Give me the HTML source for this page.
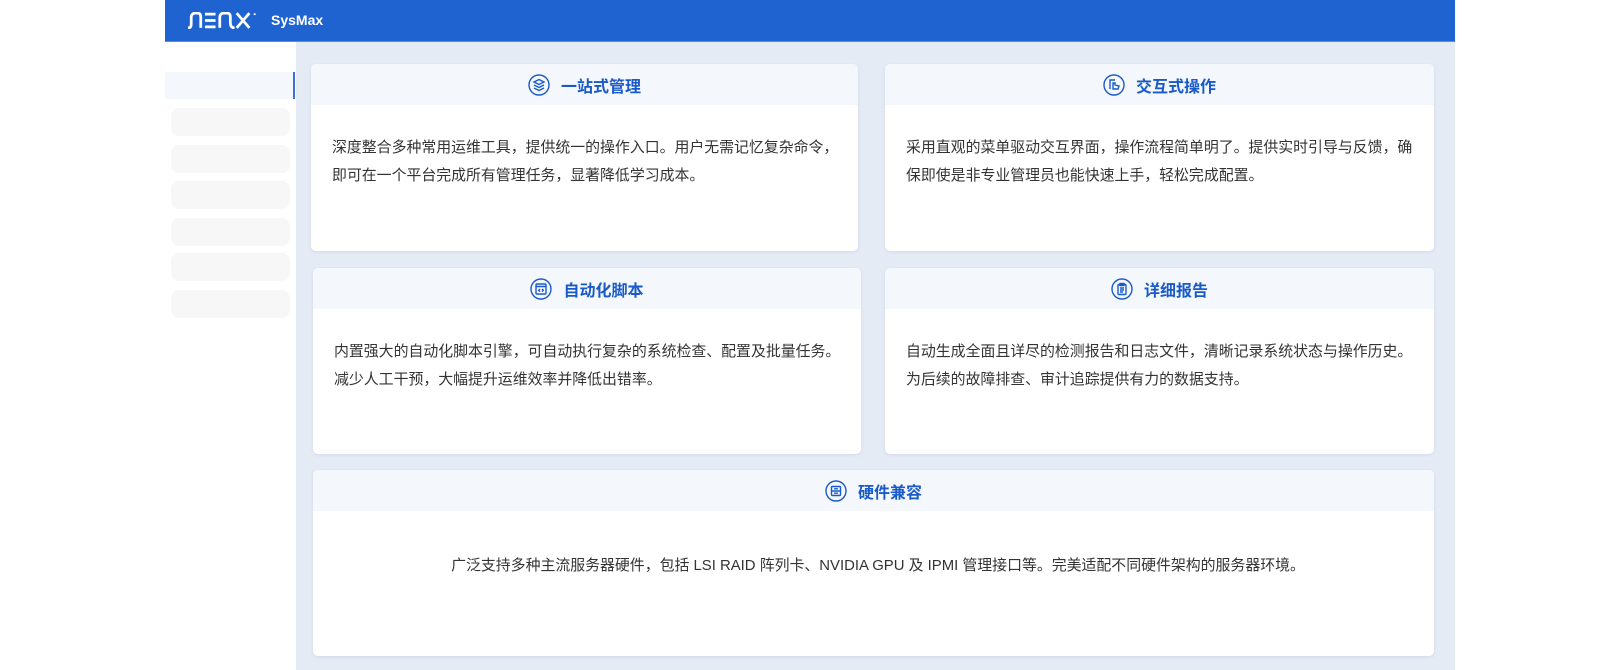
<!DOCTYPE html>
<html><head><meta charset="utf-8"><style>
*{margin:0;padding:0;box-sizing:border-box}
body{width:1620px;height:670px;background:#fff;position:relative;overflow:hidden;font-family:"Liberation Sans","Noto Sans CJK SC",sans-serif}
.hdr{position:absolute;left:165px;top:0;width:1290px;height:42px;background:#1f63d0;border-bottom:1px solid #5a8be0}
.sm{position:absolute;left:106px;top:12px;color:#fff;font-size:14px;font-weight:bold}
.side{position:absolute;left:165px;top:42px;width:131px;height:628px;background:#fff}
.act{position:absolute;left:165px;top:72px;width:130px;height:27px;background:#f4f8fd;border-right:2px solid #3a6fe0}
.gi{position:absolute;left:171px;width:119px;height:28px;background:#f7f7f7;border-radius:8px}
.main{position:absolute;left:296px;top:42px;width:1159px;height:628px;background:#e5ebf5}
.card{position:absolute;background:#fff;border-radius:5px;box-shadow:0 1px 3px rgba(120,140,180,.18);overflow:hidden}
.ch{height:41px;background:#f4f8fd;display:flex;align-items:center;justify-content:center;color:#1a5ac8;font-weight:bold;font-size:16px}
.ch svg{margin-right:11px}
.cb{padding:29px 12px 0 21px;font-size:14.9px;line-height:28px;color:#333}
</style></head><body>
<div class="hdr">
<svg style="position:absolute;left:22px;top:12px" width="74" height="17" viewBox="0 0 70 16" fill="none" stroke="#fff" stroke-width="2.6">
<path d="M1 15 C4 15 4 13 4 10 L4 5 C4 2 6 1 8 1 L10 1 C12 1 13 2 13 5 L13 15"/>
<path d="M17 2 H27 M17 8 H27 M17 14 H27"/>
<path d="M31 15 V5 C31 2 33 1 35 1 H38 C40 1 41 2 41 5 V10 C41 13 42 15 45 15"/>
<path d="M47 1 L59 15 M59 1 L47 15"/>
<circle cx="64" cy="2" r="1" fill="#fff" stroke="none"/>
</svg>
<div class="sm">SysMax</div>
</div>
<div class="side"></div>
<div class="act"></div>
<div class="gi" style="top:108px"></div>
<div class="gi" style="top:145px"></div>
<div class="gi" style="top:181px"></div>
<div class="gi" style="top:218px"></div>
<div class="gi" style="top:253px"></div>
<div class="gi" style="top:290px"></div>
<div class="main"></div>

<div class="card" style="left:311px;top:64px;width:547px;height:187px">
<div class="ch"><svg width="22" height="22" viewBox="0 0 22 22" fill="none" stroke="#1a5ac8" stroke-width="1.4"><circle cx="11" cy="11" r="10"/><path d="M6 8 L11 5.5 L16 8 L11 10.5Z"/><path d="M6 11 L11 13.5 L16 11"/><path d="M6 14 L11 16.5 L16 14"/></svg>一站式管理</div>
<div class="cb">深度整合多种常用运维工具，提供统一的操作入口。用户无需记忆复杂命令，即可在一个平台完成所有管理任务，显著降低学习成本。</div></div>

<div class="card" style="left:885px;top:64px;width:549px;height:187px">
<div class="ch"><svg width="22" height="22" viewBox="0 0 22 22" fill="none" stroke="#1a5ac8" stroke-width="1.4"><circle cx="11" cy="11" r="10"/><path d="M7 15 V6 H12"/><path d="M10 9 V15 H15 L16 12 L12 11 V9Z"/></svg>交互式操作</div>
<div class="cb">采用直观的菜单驱动交互界面，操作流程简单明了。提供实时引导与反馈，确保即使是非专业管理员也能快速上手，轻松完成配置。</div></div>

<div class="card" style="left:313px;top:268px;width:548px;height:186px">
<div class="ch"><svg width="22" height="22" viewBox="0 0 22 22" fill="none" stroke="#1a5ac8" stroke-width="1.4"><circle cx="11" cy="11" r="10"/><rect x="6" y="6" width="10" height="10" rx="1"/><path d="M6 8.5 H16"/><path d="M10 11 L8.7 12.3 L10 13.6 M12 11 L13.3 12.3 L12 13.6"/></svg>自动化脚本</div>
<div class="cb">内置强大的自动化脚本引擎，可自动执行复杂的系统检查、配置及批量任务。减少人工干预，大幅提升运维效率并降低出错率。</div></div>

<div class="card" style="left:885px;top:268px;width:549px;height:186px">
<div class="ch"><svg width="22" height="22" viewBox="0 0 22 22" fill="none" stroke="#1a5ac8" stroke-width="1.4"><circle cx="11" cy="11" r="10"/><rect x="7" y="6.5" width="8" height="10" rx="1"/><rect x="9" y="5.5" width="4" height="2"/><path d="M9 10 H13 M9 12 H13 M9 14 H12"/></svg>详细报告</div>
<div class="cb">自动生成全面且详尽的检测报告和日志文件，清晰记录系统状态与操作历史。为后续的故障排查、审计追踪提供有力的数据支持。</div></div>

<div class="card" style="left:313px;top:470px;width:1121px;height:186px">
<div class="ch"><svg width="22" height="22" viewBox="0 0 22 22" fill="none" stroke="#1a5ac8" stroke-width="1.4"><circle cx="11" cy="11" r="10"/><rect x="6.5" y="6.5" width="9" height="9" rx="1"/><path d="M6.5 11 H15.5 M9 8.8 H13 M9 13.2 H13"/></svg>硬件兼容</div>
<div class="cb" style="text-align:center;padding-top:41px">广泛支持多种主流服务器硬件，包括 LSI RAID 阵列卡、NVIDIA GPU 及 IPMI 管理接口等。完美适配不同硬件架构的服务器环境。</div></div>
</body></html>
